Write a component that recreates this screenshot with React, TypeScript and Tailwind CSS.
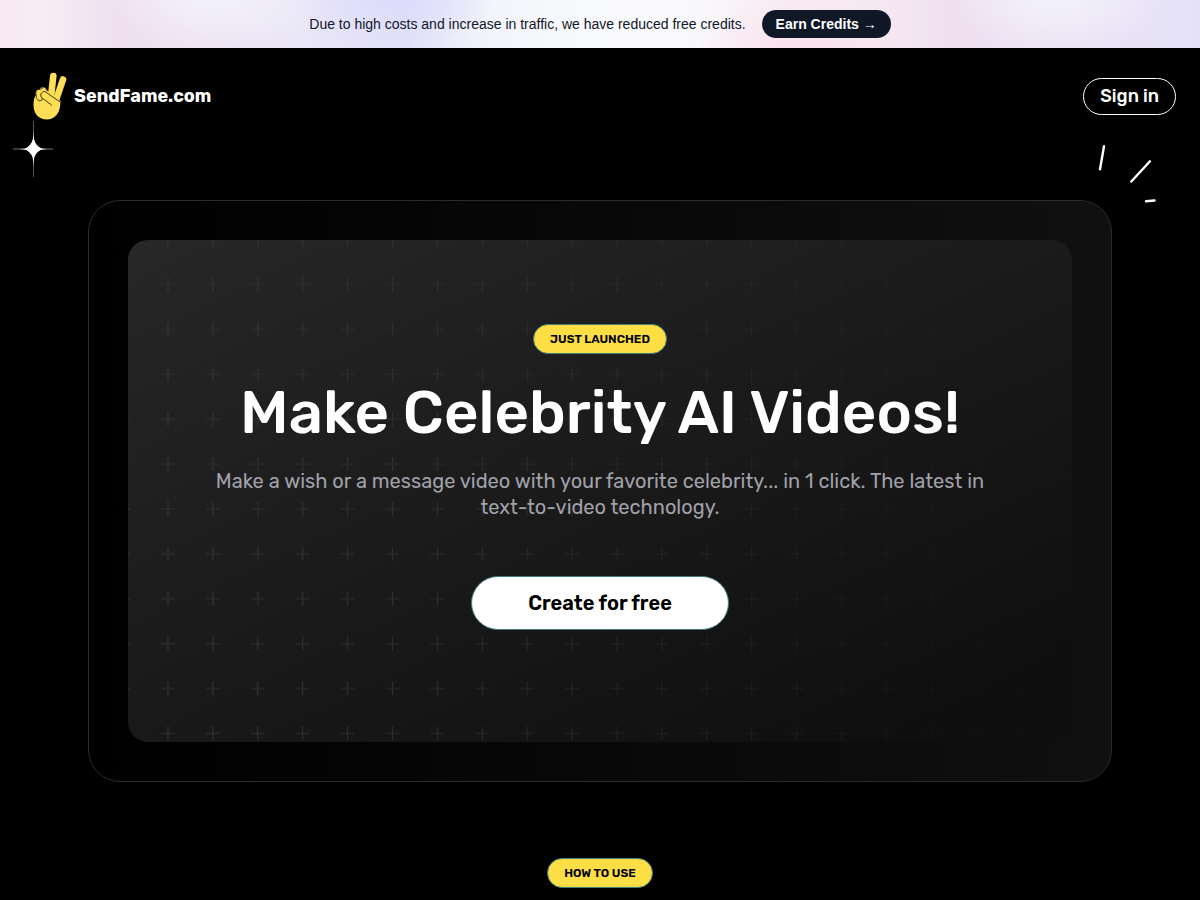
import type { ReactNode } from "react"

function PeaceHand() {
  return (
    <svg viewBox="0 0 36 50" className="h-[50px] w-9" aria-hidden="true">
      <g strokeLinecap="round" fill="none">
        <path d="M21.300 5 19 26" stroke="#fdde55" strokeWidth="6.600" />
        <path d="M31 8.500 24 29" stroke="#fdde55" strokeWidth="6.600" />
      </g>
      <path
        d="M1.500 34C1.500 29 2.500 26 4 23.500 3 20 5 18 8 18.500 9.500 15 14 15.500 14.500 19L28.500 30C28.500 33 28 35 27.500 38 26 44 21 48.500 15 48.500 7 48.500 1.500 43 1.500 34Z"
        fill="#fdde55"
      />
      <g stroke="#3d3517" strokeWidth="1" fill="none" strokeLinecap="round">
        <path d="M4 24C3 20 5 18 8 18.500" />
        <path d="M9.500 18C11 15 14 16 14.500 19" />
        <path d="M19.500 34 10 27C7.500 25 9 20 13 20.500L28 31" />
        <path d="M4 24C4 28 6 30.500 9.500 29.500 10.500 29 10 28 10 27.500" />
      </g>
    </svg>
  )
}

function Sparkle() {
  return (
    <svg viewBox="0 0 40 56" className="h-14 w-10" aria-hidden="true">
      <path d="M20.500 0V56" stroke="#555" />
      <path d="M0 28H40" stroke="#777" />
      <path d="M20.500 10Q20.800 22 23 25.500 26 28 34 28 26 28.500 23 31 20.800 34 20.500 46 20 34 18 31 15 28.500 7 28 15 28 18 25.500 20 22 20.500 10Z" fill="#fff" />
      <path d="M20.500 17Q22.500 25 29.500 28 22.500 31 20.500 38 18 31 11.500 28 18 25 20.500 17Z" fill="#fff" />
    </svg>
  )
}

function Strokes() {
  return (
    <svg viewBox="0 0 60 60" className="size-[60px]" aria-hidden="true">
      <g stroke="#fff" strokeWidth="2.400" strokeLinecap="round">
        <path d="M8 2.300 4 25.300" />
        <path d="M54 17.300 35.300 37.500" />
        <path d="M50 57.300 58.500 56.500" />
      </g>
    </svg>
  )
}

function Badge({ children }: { children: ReactNode }) {
  return (
    <span className="rounded-full border border-[#457b7b] bg-[#fdde44] px-4 py-1.5 text-xs leading-4 font-semibold text-black uppercase">
      {children}
    </span>
  )
}

export default function App() {
  return (
    <div className="min-h-screen overflow-hidden bg-black font-[Rubik,Roboto,sans-serif] text-white">
      <div className="flex min-h-12 items-center justify-center gap-4 bg-[radial-gradient(110px_48px_at_18%_0%,#f3f2fb,transparent),radial-gradient(110px_48px_at_88%_0%,#f3f2fb,transparent),radial-gradient(100px_48px_at_33%_0%,#dedbfc,transparent),radial-gradient(110px_48px_at_67%_100%,#fae2ed,transparent),linear-gradient(90deg,#f9e9f0_0%,#f7ecf3_4%,#efdff1_10%,#efe3f3_15%,#ebe7f7_24%,#e2e1f9_34%,#f4f5fb_41%,#f9fafc_50%,#f9f9fb_58%,#f8ebf3_65%,#f6e8f1_73%,#efdff1_80%,#ede5f5_87%,#e9e3f6_94%,#e5e2f8_100%)] px-6 font-['Liberation_Sans',sans-serif] text-sm leading-6 text-gray-900">
        <p>Due to high costs and increase in traffic, we have reduced free credits.</p>
        <a href="#credits" className="rounded-full bg-gray-900 px-3.5 py-1 text-sm leading-5 font-semibold text-white">
          Earn Credits <span aria-hidden="true">→</span>
        </a>
      </div>

      <header className="flex h-24 items-center justify-between px-6">
        <a href="#home" className="flex items-center gap-1.5 pl-2 text-lg font-bold">
          <PeaceHand />
          SendFame.com
        </a>
        <button type="button" className="rounded-full border border-white px-4 py-1 text-lg leading-[27px] font-medium">
          Sign in
        </button>
      </header>

      <main className="relative px-[88px] pt-14">
        <div className="absolute -top-[23px] left-[13px]">
          <Sparkle />
        </div>
        <div className="absolute top-0 right-11">
          <Strokes />
        </div>

        <section className="rounded-[32px] border border-[#2b2b2b] bg-linear-to-r/srgb from-black to-[#101010] p-[39px]">
          <div className="relative overflow-hidden rounded-[20px] bg-linear-155/srgb from-[#272727] to-[#0f0f0f] to-90% px-16 py-[84px] text-center">
            <svg className="absolute inset-0 size-full mask-r-from-0% mask-r-to-100%" aria-hidden="true">
              <defs>
                <pattern id="plus" width="44.900" height="44.900" x="17.500" y="22.500" patternUnits="userSpaceOnUse">
                  <path d="M22.500 15v14" stroke="#363636" strokeWidth="1.200" />
                  <path d="M15.500 22h14" stroke="#2d2d2d" strokeWidth="1.500" />
                </pattern>
              </defs>
              <rect width="100%" height="100%" fill="url(#plus)" />
            </svg>
            <div className="relative flex flex-col items-center">
              <Badge>Just launched</Badge>
              <h1 className="mt-7 text-[60px] leading-[62px] font-medium">Make Celebrity AI Videos!</h1>
              <p className="mt-6 max-w-[800px] text-xl leading-[26px] text-[#a1a1aa]">
                Make a wish or a message video with your favorite celebrity... in 1 click. The latest in text-to-video
                technology.
              </p>
              <button
                type="button"
                className="mt-14 mb-7 rounded-full border border-[#457b7b] bg-white px-14 py-3 text-xl leading-7 font-semibold text-black"
              >
                Create for free
              </button>
            </div>
          </div>
        </section>

        <div className="flex justify-center pt-[76px] pb-3">
          <Badge>How to use</Badge>
        </div>
      </main>
    </div>
  )
}
